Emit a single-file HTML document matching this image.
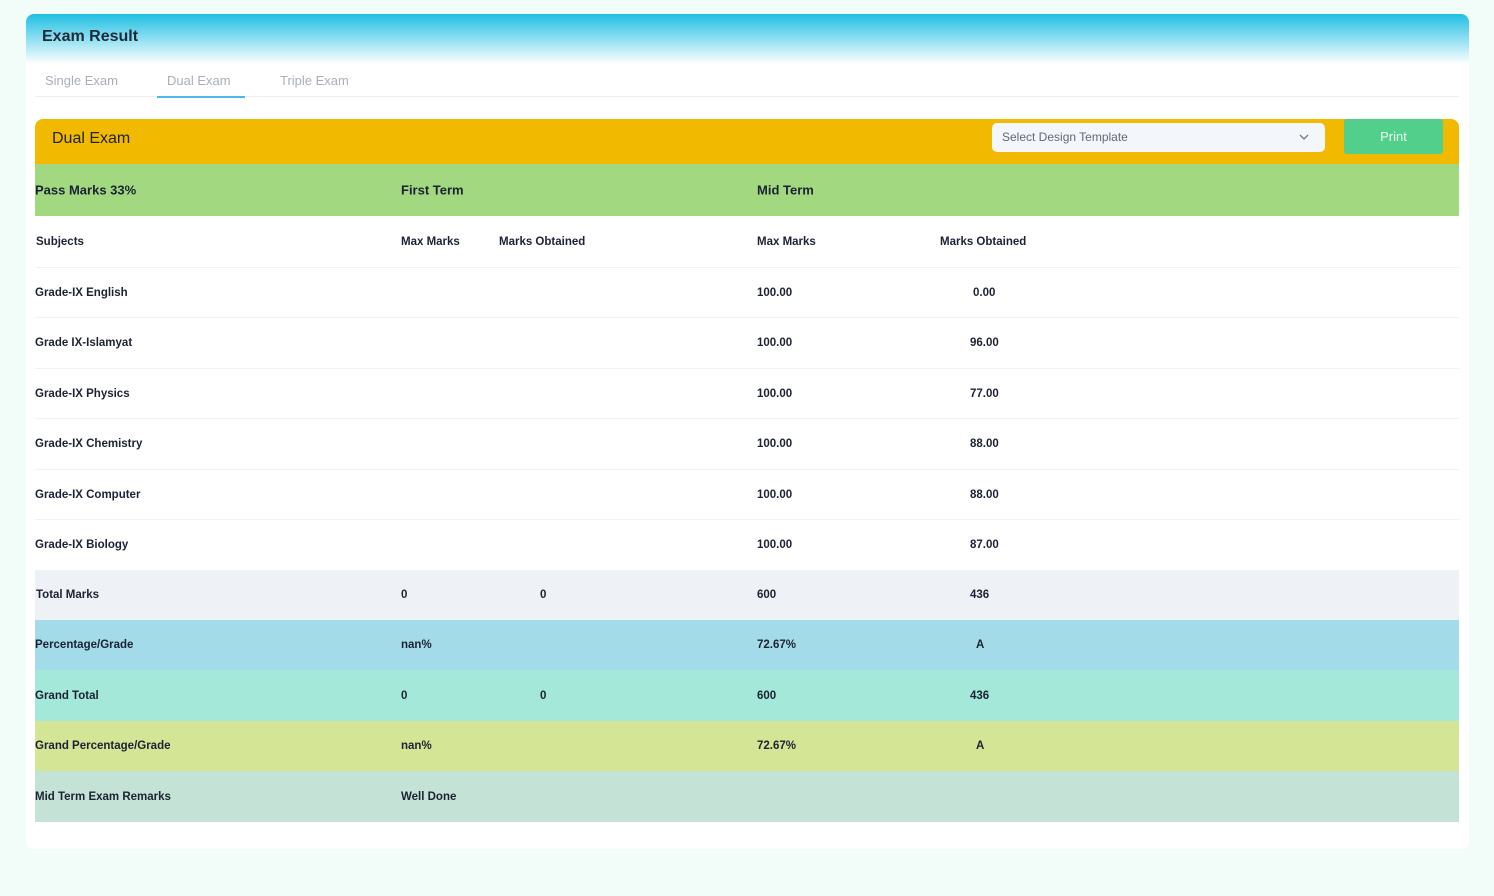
<!DOCTYPE html><html><head><style>
body{margin:0;width:1494px;height:896px;background:#f2fcf9;font-family:"Liberation Sans",sans-serif;position:relative;overflow:hidden}
.card{position:absolute;left:26px;top:14px;width:1443px;height:835px;background:#fff;border-radius:8px;overflow:hidden}
.hd{height:50px;background:linear-gradient(#1fbfe3,#fff);padding:0 16px;font-weight:bold;font-size:16px;color:#1e2a3a;line-height:46px}
.t{position:absolute;font-size:13px;color:#a8aebb;top:59px}
.row{position:absolute;left:9px;width:1424px;font-size:11.5px;font-weight:bold;color:#1c2233}
.row span{position:absolute;top:50%;transform:translateY(-50%)}
.b{border-bottom:1px solid #f0f2f4}
</style></head><body>
<div class="card">
<div class="hd">Exam Result</div>
<div class="t" style="left:19px">Single Exam</div>
<div class="t" style="left:141px">Dual Exam</div>
<div class="t" style="left:254px">Triple Exam</div>
<div style="position:absolute;left:9px;width:1424px;top:82px;border-top:1px solid #eceef0"></div>
<div style="position:absolute;left:131px;width:88px;top:82px;height:2px;background:#4bb8ee"></div>
<div style="position:absolute;left:9px;top:105px;width:1424px;height:45px;background:#f1ba00;border-radius:8px 8px 0 0">
<span style="position:absolute;left:17px;top:11px;font-size:16px;color:#222">Dual Exam</span>
<div style="position:absolute;left:957px;top:4px;width:333px;height:29px;background:#f3f6fa;border-radius:5px;font-size:12px;color:#667;line-height:29px;padding-left:10px;box-sizing:border-box">Select Design Template
<svg style="position:absolute;right:16px;top:11px" width="10" height="7"><path d="M1 1L5 5L9 1" stroke="#777" fill="none" stroke-width="1.3"/></svg></div>
<div style="position:absolute;left:1309px;top:0;width:99px;height:35px;background:#52cf8b;border-radius:3px;color:#eefff4;font-size:13px;text-align:center;line-height:35px">Print</div>
</div>
<div class="row" style="top:150px;height:52px;background:#a1d880;font-size:13px"><span style="left:0">Pass Marks 33%</span><span style="left:366px">First Term</span><span style="left:722px">Mid Term</span></div>
<div class="row b" style="top:202px;height:51px;font-size:11.5px"><span style="left:1px">Subjects</span><span style="left:366px">Max Marks</span><span style="left:464px">Marks Obtained</span><span style="left:722px">Max Marks</span><span style="left:905px">Marks Obtained</span></div>
<div class="row b" style="top:254px;height:49px"><span style="left:0">Grade-IX English</span><span style="left:722px">100.00</span><span style="left:938px">0.00</span></div>
<div class="row b" style="top:304px;height:50px"><span style="left:0">Grade IX-Islamyat</span><span style="left:722px">100.00</span><span style="left:935px">96.00</span></div>
<div class="row b" style="top:355px;height:49px"><span style="left:0">Grade-IX Physics</span><span style="left:722px">100.00</span><span style="left:935px">77.00</span></div>
<div class="row b" style="top:405px;height:50px"><span style="left:0">Grade-IX Chemistry</span><span style="left:722px">100.00</span><span style="left:935px">88.00</span></div>
<div class="row b" style="top:456px;height:49px"><span style="left:0">Grade-IX Computer</span><span style="left:722px">100.00</span><span style="left:935px">88.00</span></div>
<div class="row" style="top:506px;height:50px"><span style="left:0">Grade-IX Biology</span><span style="left:722px">100.00</span><span style="left:935px">87.00</span></div>
<div class="row" style="top:556px;height:50px;background:#eef1f5"><span style="left:1px">Total Marks</span><span style="left:366px">0</span><span style="left:505px">0</span><span style="left:722px">600</span><span style="left:935px">436</span></div>
<div class="row" style="top:606px;height:50px;background:#a3dbe8"><span style="left:0">Percentage/Grade</span><span style="left:366px">nan%</span><span style="left:722px">72.67%</span><span style="left:941px">A</span></div>
<div class="row" style="top:656px;height:51px;background:#a3e8d8"><span style="left:0">Grand Total</span><span style="left:366px">0</span><span style="left:505px">0</span><span style="left:722px">600</span><span style="left:935px">436</span></div>
<div class="row" style="top:707px;height:50px;background:#d4e595"><span style="left:0">Grand Percentage/Grade</span><span style="left:366px">nan%</span><span style="left:722px">72.67%</span><span style="left:941px">A</span></div>
<div class="row" style="top:757px;height:51px;background:#c4e3d6"><span style="left:0">Mid Term Exam Remarks</span><span style="left:366px">Well Done</span></div>
</div>
</body></html>
